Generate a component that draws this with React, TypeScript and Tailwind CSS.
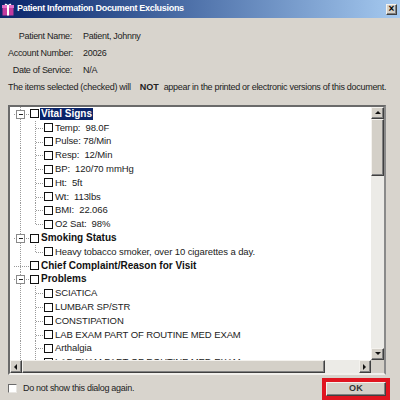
import React from "react";

type Row = {
  level: 0 | 1;
  text: string;
  expand?: boolean;
  last?: boolean;
  selected?: boolean;
};

const ROWS: Row[] = [
  { level: 0, text: "Vital Signs", expand: true, selected: true },
  { level: 1, text: "Temp:  98.0F" },
  { level: 1, text: "Pulse: 78/Min" },
  { level: 1, text: "Resp:  12/Min" },
  { level: 1, text: "BP:  120/70 mmHg" },
  { level: 1, text: "Ht:  5ft" },
  { level: 1, text: "Wt:  113lbs" },
  { level: 1, text: "BMI:  22.066" },
  { level: 1, text: "O2 Sat:  98%", last: true },
  { level: 0, text: "Smoking Status", expand: true },
  { level: 1, text: "Heavy tobacco smoker, over 10 cigarettes a day.", last: true },
  { level: 0, text: "Chief Complaint/Reason for Visit" },
  { level: 0, text: "Problems", expand: true },
  { level: 1, text: "SCIATICA" },
  { level: 1, text: "LUMBAR SP/STR" },
  { level: 1, text: "CONSTIPATION" },
  { level: 1, text: "LAB EXAM PART OF ROUTINE MED EXAM" },
  { level: 1, text: "Arthalgia" },
  { level: 1, text: "LAB EXAM PART OF ROUTINE MED EXAM" },
];

const LINE = "#9a9a9a";
const raised =
  "border border-t-[#f4f2ee] border-l-[#f4f2ee] border-b-[#404040] border-r-[#404040] shadow-[inset_-1px_-1px_0_#808080] bg-[#d4d0c8]";

function Connector({ row }: { row: Row }) {
  if (row.level === 0) {
    return (
      <svg width="20" height="14" className="shrink-0" shapeRendering="crispEdges">
        <line x1="10.5" y1="0" x2="10.5" y2="14" stroke={LINE} strokeDasharray="1 1" />
        <line x1="4" y1="7.5" x2="20" y2="7.5" stroke={LINE} strokeDasharray="1 1" />
        {row.expand && (
          <>
            <rect x="6.5" y="3.5" width="8" height="8" fill="white" stroke="#8a8a8a" />
            <line x1="8.5" y1="7.5" x2="13" y2="7.5" stroke="#222" />
          </>
        )}
      </svg>
    );
  }
  return (
    <svg width="34" height="14" className="shrink-0" shapeRendering="crispEdges">
      <line x1="10.5" y1="0" x2="10.5" y2="14" stroke={LINE} strokeDasharray="1 1" />
      <line x1="25.5" y1="0" x2="25.5" y2={row.last ? 7.5 : 14} stroke={LINE} strokeDasharray="1 1" />
      <line x1="25.5" y1="7.5" x2="34" y2="7.5" stroke={LINE} strokeDasharray="1 1" />
    </svg>
  );
}

function TreeRow({ row }: { row: Row }) {
  return (
    <div className="flex items-center h-[13.8px] whitespace-pre">
      <Connector row={row} />
      <span className="w-[9px] h-[9px] border-[1.5px] border-[#111] bg-white shrink-0" />
      {row.level === 0 ? (
        <span
          className={
            "ml-[1px] px-[1px] font-bold text-[10px] leading-[12px] " +
            (row.selected ? "bg-[#0a246a] text-white" : "text-[#111]")
          }
        >
          {row.text}
        </span>
      ) : (
        <span className="ml-[2px] text-[9.5px] tracking-[-0.1px] text-[#222]">{row.text}</span>
      )}
    </div>
  );
}

function Arrow({ dir }: { dir: "up" | "down" | "left" | "right" }) {
  const pts = {
    up: "1,5 7,5 4,2",
    down: "1,2 7,2 4,5",
    left: "5,1 5,7 2,4",
    right: "2,1 2,7 5,4",
  }[dir];
  return (
    <svg width="8" height="8">
      <polygon points={pts} fill="#111" />
    </svg>
  );
}

export default function App() {
  return (
    <div
      className="w-[400px] h-[400px] overflow-hidden bg-[#d8d4cd] flex flex-col text-black"
      style={{ fontFamily: '"Liberation Sans", Arial, sans-serif' }}
    >
      {/* title bar */}
      <div className="h-[18px] flex items-center bg-gradient-to-r from-[#0a246a] to-[#a6caf0] pl-[2px] pr-[3px]">
        <svg width="12" height="13" viewBox="0 0 12 13" className="shrink-0">
          <rect x="0.5" y="3" width="11" height="9.5" fill="#c23a9e" />
          <rect x="0" y="2" width="12" height="3" fill="#e070c8" />
          <rect x="5" y="2" width="2" height="10.5" fill="#fff" />
          <path d="M6 2 C4 0 2 0.5 3 2 Z M6 2 C8 0 10 0.5 9 2 Z" fill="#fff" />
        </svg>
        <span className="ml-[3px] text-white font-bold text-[9px] tracking-[-0.3px]">
          Patient Information Document Exclusions
        </span>
        <div className={"ml-auto w-[11px] h-[11px] flex items-center justify-center " + raised}>
          <span className="text-[10px] leading-none font-bold">×</span>
        </div>
      </div>

      {/* header */}
      <div className="pt-[10px] px-[8px] text-[9px] tracking-[-0.3px] text-[#222] whitespace-nowrap">
        {[
          ["Patient Name:", "Patient, Johnny"],
          ["Account Number:", "20026"],
          ["Date of Service:", "N/A"],
        ].map(([k, v]) => (
          <div key={k} className="h-[17px] flex items-center">
            <span className="w-[64px] text-right shrink-0">{k}</span>
            <span className="ml-[11px]">{v}</span>
          </div>
        ))}
        <div className="h-[17px] flex items-center whitespace-pre">
          <span>The items selected (checked) will</span>
          <span className="ml-[9px] mr-[5px] font-bold text-[9px] tracking-normal">NOT</span>
          <span>appear in the printed or electronic versions of this document.</span>
        </div>
      </div>

      {/* tree box */}
      <div className="mt-[9px] ml-[8px] w-[378px] h-[270px] border-2 border-t-[#6a6a6a] border-l-[#6a6a6a] border-b-[#f2f0ec] border-r-[#8a8a8a] flex flex-col bg-white">
        <div className="flex flex-1 min-h-0">
          <div className="flex-1 overflow-hidden flex flex-col">
            {ROWS.map((r, i) => (
              <TreeRow key={i} row={r} />
            ))}
          </div>
          <div className="w-[13px] flex flex-col bg-[#ecebe7]">
            <div className={"h-[12px] flex items-center justify-center " + raised}>
              <Arrow dir="up" />
            </div>
            <div className={"h-[57px] " + raised} />
            <div className="flex-1" />
            <div className={"h-[12px] flex items-center justify-center " + raised}>
              <Arrow dir="down" />
            </div>
          </div>
        </div>
        <div className="h-[13px] flex">
          <div className="flex-1 flex bg-[#ecebe7]">
            <div className={"w-[12px] flex items-center justify-center " + raised}>
              <Arrow dir="left" />
            </div>
            <div className={"w-[303px] " + raised} />
            <div className="flex-1" />
            <div className={"w-[12px] flex items-center justify-center " + raised}>
              <Arrow dir="right" />
            </div>
          </div>
          <div className="w-[13px] bg-[#d4d0c8]" />
        </div>
      </div>

      {/* footer */}
      <div className="flex-1 flex items-end justify-between pl-[8px] pr-[10px]">
        <div className="flex items-center mb-[5px]">
          <span className="w-[9px] h-[9px] bg-white border border-t-[#6a6a6a] border-l-[#6a6a6a] border-b-[#e8e6e2] border-r-[#e8e6e2]" />
          <span className="ml-[6px] text-[9px] tracking-[-0.3px] text-[#222]">
            Do not show this dialog again.
          </span>
        </div>
        <div className="w-[68px] h-[22px] border-[4px] border-[#e01520] flex">
          <div className={"flex-1 flex items-center justify-center " + raised}>
            <span className="text-[9px] font-semibold tracking-[0.3px] text-[#333]">OK</span>
          </div>
        </div>
      </div>
    </div>
  );
}
